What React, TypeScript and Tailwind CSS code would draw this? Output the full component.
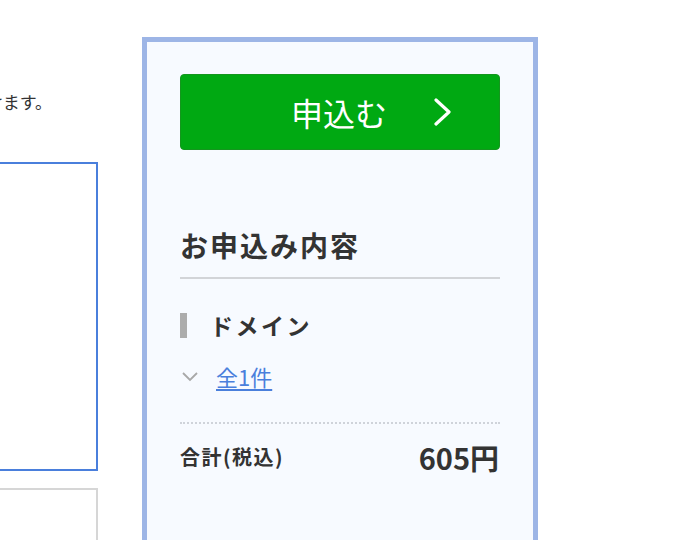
const jp = '[font-family:"Noto_Sans_CJK_JP","Noto_Sans",sans-serif]';

function ChevronRight() {
  return (
    <svg width="20" height="28" viewBox="0 0 20 28" fill="none" className="absolute right-[46px] top-[23px]">
      <polyline points="3,2 16,14 3,26" stroke="#fff" strokeWidth="3.2" strokeLinecap="round" strokeLinejoin="round" />
    </svg>
  );
}

function ChevronDown() {
  return (
    <svg width="18" height="12" viewBox="0 0 18 12" fill="none">
      <polyline points="2,2 9,9 16,2" stroke="#a8a8a8" strokeWidth="1.8" />
    </svg>
  );
}

export default function App() {
  return (
    <div className={`flex w-[674px] h-[540px] overflow-hidden bg-white text-[#333] ${jp}`}>
      {/* main column, cut off at the left */}
      <div className="w-[98px] shrink-0 overflow-hidden">
        <div className="mt-[89px] w-[52px] h-[26px] overflow-hidden flex justify-end whitespace-nowrap text-[17px] leading-[26px]">
          ドメインの取得後すぐにご利用いただけます。
        </div>
        <div className="mt-[47px] ml-[-10px] w-[108px] h-[309px] border-2 border-[#4a7fdc] bg-white" />
        <div className="mt-[17px] ml-[-10px] w-[108px] h-[80px] border-2 border-[#d6d6d6] bg-white" />
      </div>

      {/* order summary */}
      <div className="ml-[44px] mt-[37px] w-[396px] h-[600px] shrink-0 border-[5px] border-[#9db5e6] bg-[#f7faff] px-[33px] pt-[32px]">
        <button className="relative flex w-full h-[76px] items-center justify-center rounded-[4px] border border-[#14961e] bg-[#00a912] text-white text-[32px] leading-none">
          <span className="ml-[-2px]">申込む</span>
          <ChevronRight />
        </button>

        <div className="mt-[76px] border-b-2 border-[#d2d4d8] pb-[13px]">
          <h2 className="text-[28px] leading-[38px] font-bold tracking-[2px]">お申込み内容</h2>
        </div>

        <div className="mt-[34px] flex h-[25px] items-center">
          <span className="w-[7px] h-[25px] bg-[#acacac]" />
          <span className="ml-[23px] text-[23px] leading-[25px] font-bold tracking-[2.5px]">ドメイン</span>
        </div>

        <div className="mt-[26px] flex h-[24px] items-center">
          <span className="ml-[1px] mt-[2px]"><ChevronDown /></span>
          <a href="#" className="ml-[17px] text-[22px] leading-[24px] text-[#4a7fdc] underline underline-offset-[3px]">全1件</a>
        </div>

        <div className="mt-[34px] border-t-2 border-dotted border-[#cfd3da]" />

        <div className="mt-[20px] flex h-[26px] items-center justify-between">
          <span className="text-[20px] font-bold leading-[26px] tracking-[1.5px]">合計(税込)</span>
          <span className="text-[29px] font-bold leading-[26px] mr-[1px]">605円</span>
        </div>
      </div>
    </div>
  );
}
